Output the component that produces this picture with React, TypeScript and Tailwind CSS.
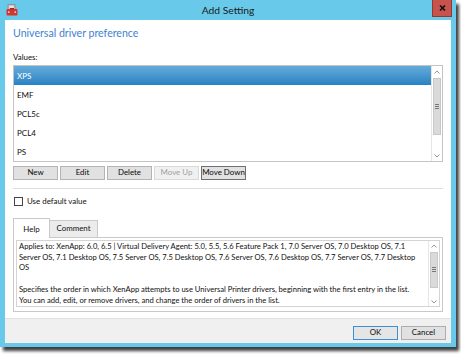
import React from "react";

const font = { fontFamily: 'Lato, "Noto Sans", sans-serif' };

function Btn({ label, disabled, strong }: { label: string; disabled?: boolean; strong?: boolean }) {
  return (
    <div
      className={`w-[45px] h-[14px] flex items-center justify-center whitespace-nowrap text-[7.9px] leading-none border ${
        disabled
          ? "text-[#a0a0a0] bg-[#f0f0f0] border-[#d9d9d9]"
          : strong
          ? "text-[#0a0a0a] bg-[#e1e1e1] border-[#707070]"
          : "text-[#0a0a0a] bg-[#e1e1e1] border-[#b4b4b4]"
      }`}
    >
      {label}
    </div>
  );
}

function ScrollBar({ up, thumb, track, down }: { up: number; thumb: number; track: number; down: number }) {
  return (
    <div className="w-[11px] flex flex-col border-l border-[#e6e6e6] bg-white">
      <div className="flex items-center justify-center" style={{ height: up }}>
        <svg width="6" height="4" viewBox="0 0 6 4">
          <path d="M0.5 3.5 L3 1 L5.5 3.5" fill="none" stroke="#8a8a8a" strokeWidth="0.9" />
        </svg>
      </div>
      <div
        className="mx-[1px] bg-[#dadada] border border-[#c8c8c8] flex items-center justify-center"
        style={{ height: thumb }}
      >
        <div className="flex flex-col gap-[1px]">
          <div className="w-[4px] h-[1px] bg-[#777]" />
          <div className="w-[4px] h-[1px] bg-[#777]" />
          <div className="w-[4px] h-[1px] bg-[#777]" />
        </div>
      </div>
      <div style={{ height: track }} />
      <div className="flex items-center justify-center" style={{ height: down }}>
        <svg width="6" height="4" viewBox="0 0 6 4">
          <path d="M0.5 0.5 L3 3 L5.5 0.5" fill="none" stroke="#8a8a8a" strokeWidth="0.9" />
        </svg>
      </div>
    </div>
  );
}

export default function App() {
  const rows = ["XPS", "EMF", "PCL5c", "PCL4", "PS"];
  return (
    <div className="w-[461px] h-[354px] bg-white" style={font}>
      <div className="w-[456px] h-[347px] bg-[#68c9ea] flex flex-col shadow-[3px_4px_3px_rgba(0,0,0,0.75)]">
        {/* Title bar */}
        <div className="h-[20px] flex items-start">
          <div className="ml-[6px] mt-[4px]">
            <svg width="12" height="12" viewBox="0 0 12 12">
              <rect x="2" y="0.5" width="7" height="6" fill="#b8b8b8" stroke="#8c8c8c" strokeWidth="0.8" />
              <rect x="3.2" y="1.6" width="4.6" height="3" fill="#e4e4e4" />
              <rect x="0.5" y="5" width="11" height="6.5" rx="1" fill="#d8342e" />
              <rect x="4" y="4" width="4" height="1.5" fill="#a52520" />
              <rect x="2" y="7.5" width="1.5" height="1.2" fill="#fff" />
              <rect x="8.5" y="7.5" width="1.5" height="1.2" fill="#fff" />
            </svg>
          </div>
          <div className="flex-1 pl-[6px] text-center text-[10.3px] leading-[20px] text-[#1a1a1a]">Add Setting</div>
          <div className="mr-[4px] w-[20px] h-[17px] bg-[#c8534c] border border-[#8d3a35] border-t-0 flex items-center justify-center">
            <svg width="7" height="6" viewBox="0 0 7 6">
              <path d="M1 0.5 L6 5.5 M6 0.5 L1 5.5" stroke="#111" strokeWidth="1.6" />
            </svg>
          </div>
        </div>

        {/* Content */}
        <div className="mx-[5px] flex-1 bg-white flex flex-col px-[8px] text-[#0f0f0f]">
          <div className="pt-[5px] text-[10.6px] leading-[16px] text-[#3d82d1]">Universal driver preference</div>
          <div className="mt-[11px] text-[7.9px] leading-[10px]">Values:</div>
          <div className="mt-[3px] h-[97px] border border-[#c4c4c4] flex">
            <div className="flex-1 flex flex-col">
              {rows.map((r, i) => (
                <div
                  key={r}
                  className={`h-[19.6px] flex items-center pl-[3px] text-[8px] leading-none ${
                    i === 0 ? "bg-gradient-to-b from-[#64acd9] to-[#2782c3] text-white" : ""
                  }`}
                >
                  {r}
                </div>
              ))}
            </div>
            <ScrollBar up={12} thumb={57} track={16} down={10} />
          </div>
          <div className="mt-[4px] flex gap-[2px]">
            <Btn label="New" />
            <Btn label="Edit" />
            <Btn label="Delete" />
            <Btn label="Move Up" disabled />
            <Btn label="Move Down" strong />
          </div>
          <div className="mt-[8px] h-[1px] bg-[#dedede]" />
          <div className="mt-[8px] flex items-center gap-[4px]">
            <div className="ml-[1px] w-[9px] h-[9px] border border-[#444] bg-white" />
            <div className="text-[7.9px] leading-none">Use default value</div>
          </div>
          <div className="mt-[12px] flex items-end">
            <div className="w-[37px] h-[20px] bg-white border border-[#c9c9c9] border-b-0 flex items-center justify-center text-[7.9px] leading-none relative z-10 -mb-[1px] pt-[2px]">
              Help
            </div>
            <div className="w-[48px] h-[17px] bg-[#ececec] border border-[#c9c9c9] border-l-0 border-b-0 flex items-center justify-center text-[7.9px] leading-none">
              Comment
            </div>
          </div>
          <div className="h-[75px] border border-[#c9c9c9] p-[2px] pb-[4px]">
            <div className="h-full border border-[#d4d4d4] flex">
              <div className="flex-1 px-[2px] text-[7.6px] leading-[10.7px] whitespace-nowrap overflow-hidden">
                <div>
                  Applies to: XenApp: 6.0, 6.5 | Virtual Delivery Agent: 5.0, 5.5, 5.6 Feature Pack 1, 7.0 Server OS, 7.0 Desktop OS, 7.1
                  <br />
                  Server OS, 7.1 Desktop OS, 7.5 Server OS, 7.5 Desktop OS, 7.6 Server OS, 7.6 Desktop OS, 7.7 Server OS, 7.7 Desktop
                  <br />
                  OS
                </div>
                <div className="mt-[10.7px]">
                  Specifies the order in which XenApp attempts to use Universal Printer drivers, beginning with the first entry in the list.
                  <br />
                  You can add, edit, or remove drivers, and change the order of drivers in the list.
                </div>
              </div>
              <ScrollBar up={11} thumb={38} track={10} down={9} />
            </div>
          </div>
        </div>

        {/* Bottom panel */}
        <div className="mx-[5px] mb-[4px] h-[25px] bg-[#f0f0f0] border-t border-[#e2e2e2] flex items-start justify-end gap-[3px] pr-[5px] pt-[7px]">
          <div className="w-[45px] h-[14px] border border-[#3c8fd6] bg-[#e5e5e5] flex items-center justify-center text-[7.9px] leading-none text-[#0a0a0a]">
            OK
          </div>
          <div className="w-[45px] h-[14px] border border-[#adadad] bg-[#e1e1e1] flex items-center justify-center text-[7.9px] leading-none text-[#0a0a0a]">
            Cancel
          </div>
        </div>
      </div>
    </div>
  );
}
